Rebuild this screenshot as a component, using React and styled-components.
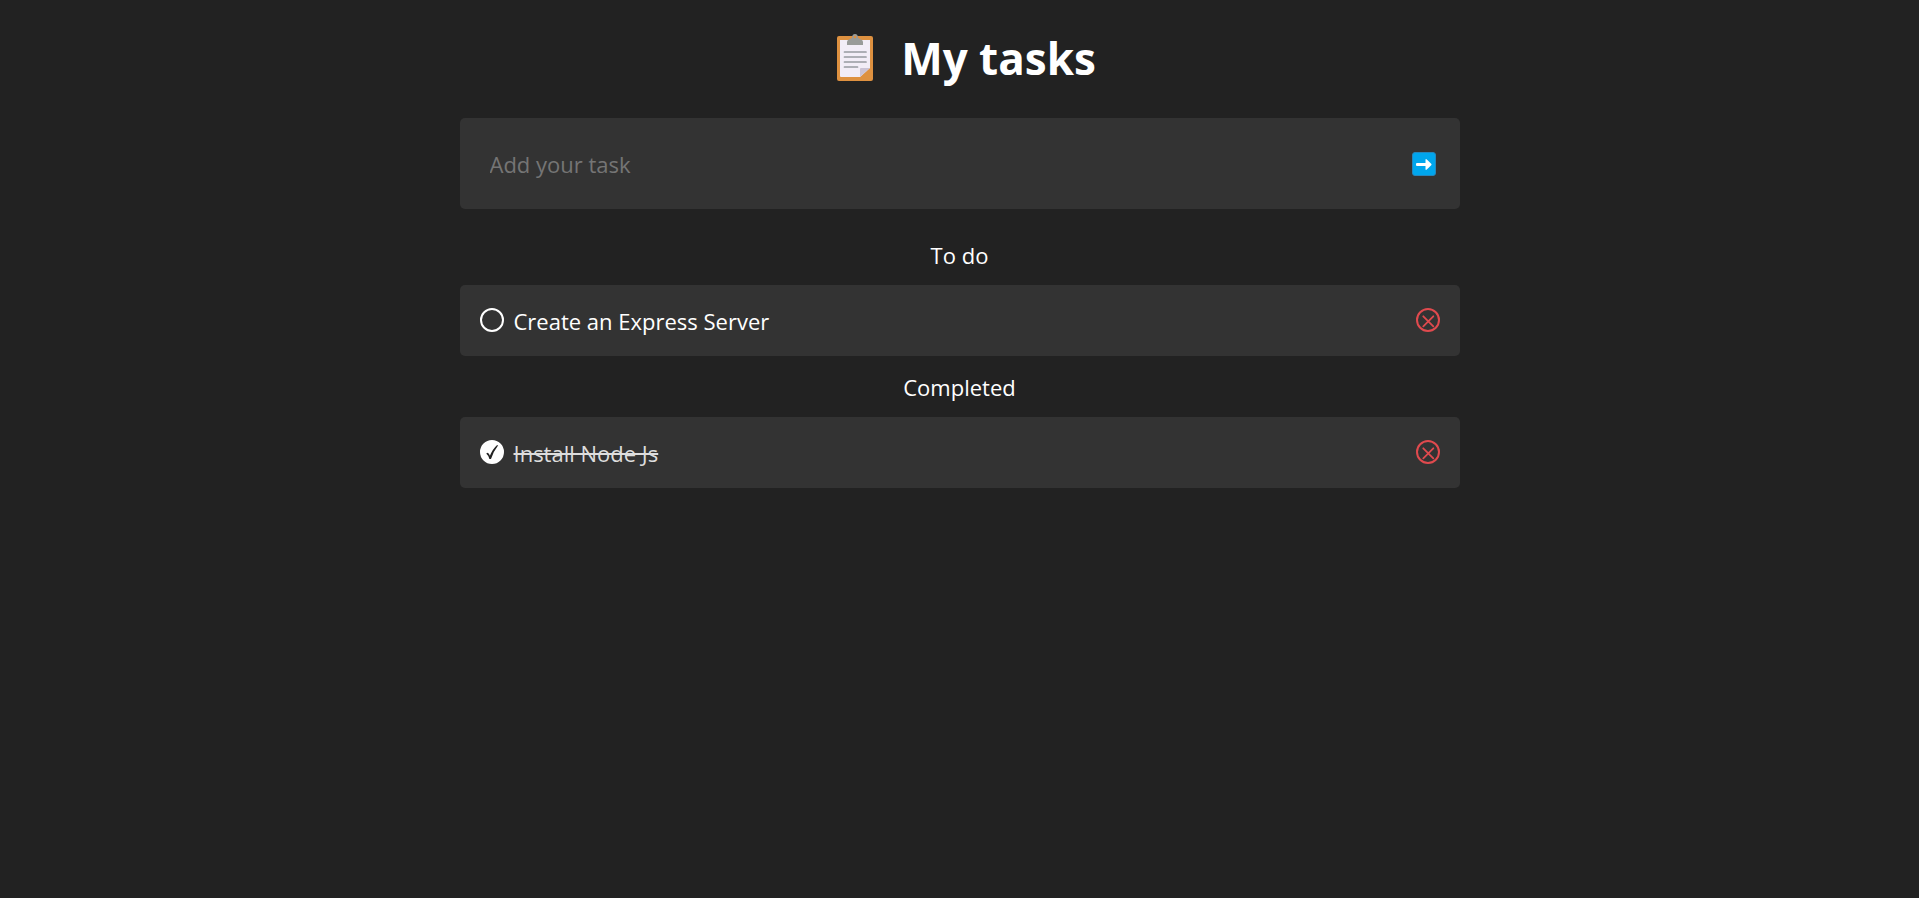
import React, { useState } from "react";
import styled, { createGlobalStyle } from "styled-components";

const GlobalStyle = createGlobalStyle`
  * { box-sizing: border-box; }
  body {
    margin: 0;
    background: #222;
    color: #fff;
    font-family: "Segoe UI", "Open Sans", "Noto Sans", sans-serif;
    font-size: 22px;
    line-height: 30px;
  }
`;

const Page = styled.main`
  width: 100%;
  max-width: 1000px;
  margin: 0 auto;
`;

const Title = styled.h1`
  display: flex;
  align-items: center;
  justify-content: center;
  gap: 28px;
  margin: 0;
  padding: 26px 0 28px 14px;
  font-size: 44px;
  line-height: 64px;
  font-weight: 700;
`;

const Form = styled.form`
  display: flex;
  align-items: center;
  height: 91px;
  padding: 1px 24px 0 30px;
  margin-bottom: 31px;
  background: #333;
  border-radius: 5px;
`;

const TaskInput = styled.input`
  flex: 1;
  min-width: 0;
  padding: 0;
  border: 0;
  outline: 0;
  background: transparent;
  color: #fff;
  font: inherit;
  &::placeholder { color: #757575; opacity: 1; }
`;

const IconButton = styled.button`
  display: flex;
  flex: none;
  padding: 0;
  border: 0;
  background: transparent;
  color: ${(p) => p.$color || "#fff"};
  cursor: pointer;
`;

const SectionTitle = styled.h2`
  margin: 0 0 15px;
  font-size: 22px;
  line-height: 30px;
  font-weight: 400;
  text-align: center;
`;

const List = styled.ul`
  list-style: none;
  margin: 0 0 16px;
  padding: 0;
`;

const Row = styled.li`
  display: flex;
  align-items: center;
  gap: 10px;
  height: 71px;
  padding: 0 20px 1px;
  background: #333;
  border-radius: 5px;
`;

const TaskText = styled.span`
  flex: 1;
  padding-top: 2px;
  color: ${(p) => (p.$done ? "#ddd" : "#fff")};
  text-decoration: ${(p) => (p.$done ? "line-through" : "none")};
`;

const ClipboardIcon = () => (
  <svg width="36" height="48" viewBox="0 0 36 48" aria-hidden="true">
    <rect x="0" y="2" width="36" height="45" rx="2" fill="#de9140" />
    <path d="M3 6H33V34L23 43H4Q3 43 3 42Z" fill="#f2edf7" />
    <path d="M23 43V35Q23 34 24 34H33L23 43Z" fill="#cbc3d5" />
    <path d="M10 11V8Q10 6 12 5.5L15 4Q15 0 18 0T21 4L24 5.5Q26 6 26 8V11Z" fill="#999b99" />
    <circle cx="18" cy="3" r="1.3" fill="#de9140" />
    <path d="M7.5 18H29M7.5 23H29M7.5 28H29M7.5 33H20.5" stroke="#9699a0" strokeWidth="1.7" strokeLinecap="round" />
  </svg>
);

const ArrowIcon = () => (
  <svg width="24" height="24" viewBox="0 0 24 24" aria-hidden="true">
    <rect x="0.5" y="0.5" width="23" height="23" rx="2.5" fill="#00a6ed" stroke="#2486bd" />
    <path d="M5 11Q4 11 4 12V13Q4 14 5 14H13.5V17Q13.5 18.5 14.8 17.6L19.2 13.3Q20 12.5 19.2 11.7L14.8 7.4Q13.5 6.5 13.5 8V11Z" fill="#fff" />
  </svg>
);

const CircleIcon = ({ done }) => (
  <svg width="24" height="24" viewBox="0 0 24 24" aria-hidden="true">
    <circle cx="12" cy="12" r="11" fill={done ? "currentColor" : "none"} stroke="currentColor" strokeWidth="2" />
    {done && (
      <path d="M6.2 13.6L7.8 12.7Q9.2 13.8 9.9 15.8Q12.6 9 16.9 5.2H18.2Q13.6 11 11 19H9.4Q8.2 15.2 6.2 13.6Z" fill="#222" />
    )}
  </svg>
);

const DeleteIcon = () => (
  <svg width="24" height="24" viewBox="0 0 24 24" fill="none" stroke="currentColor" aria-hidden="true">
    <circle cx="12" cy="12" r="11" strokeWidth="2" />
    <path d="M7.3 8.3L17.3 18.3M17.3 8.3L7.3 18.3" strokeWidth="1.8" strokeLinecap="round" />
  </svg>
);

function TaskList({ tasks, onToggle, onDelete }) {
  return (
    <List>
      {tasks.map((task) => (
        <Row key={task.id}>
          <IconButton
            type="button"
            role="checkbox"
            aria-checked={task.done}
            aria-label={task.text}
            onClick={() => onToggle(task.id)}
          >
            <CircleIcon done={task.done} />
          </IconButton>
          <TaskText $done={task.done}>{task.text}</TaskText>
          <IconButton type="button" $color="#e04a4e" aria-label="Delete task" onClick={() => onDelete(task.id)}>
            <DeleteIcon />
          </IconButton>
        </Row>
      ))}
    </List>
  );
}

export default function App() {
  const [text, setText] = useState("");
  const [tasks, setTasks] = useState([
    { id: 1, text: "Create an Express Server", done: false },
    { id: 2, text: "Install Node Js", done: true },
  ]);

  const addTask = (e) => {
    e.preventDefault();
    if (!text.trim()) return;
    setTasks([...tasks, { id: Date.now(), text: text.trim(), done: false }]);
    setText("");
  };
  const toggle = (id) => setTasks(tasks.map((t) => (t.id === id ? { ...t, done: !t.done } : t)));
  const remove = (id) => setTasks(tasks.filter((t) => t.id !== id));

  return (
    <>
      <GlobalStyle />
      <Page>
        <Title>
          <ClipboardIcon />
          My tasks
        </Title>
        <Form onSubmit={addTask}>
          <TaskInput
            aria-label="Add your task"
            placeholder="Add your task"
            value={text}
            onChange={(e) => setText(e.target.value)}
          />
          <IconButton type="submit" aria-label="Add">
            <ArrowIcon />
          </IconButton>
        </Form>
        <SectionTitle>To do</SectionTitle>
        <TaskList tasks={tasks.filter((t) => !t.done)} onToggle={toggle} onDelete={remove} />
        <SectionTitle>Completed</SectionTitle>
        <TaskList tasks={tasks.filter((t) => t.done)} onToggle={toggle} onDelete={remove} />
      </Page>
    </>
  );
}
